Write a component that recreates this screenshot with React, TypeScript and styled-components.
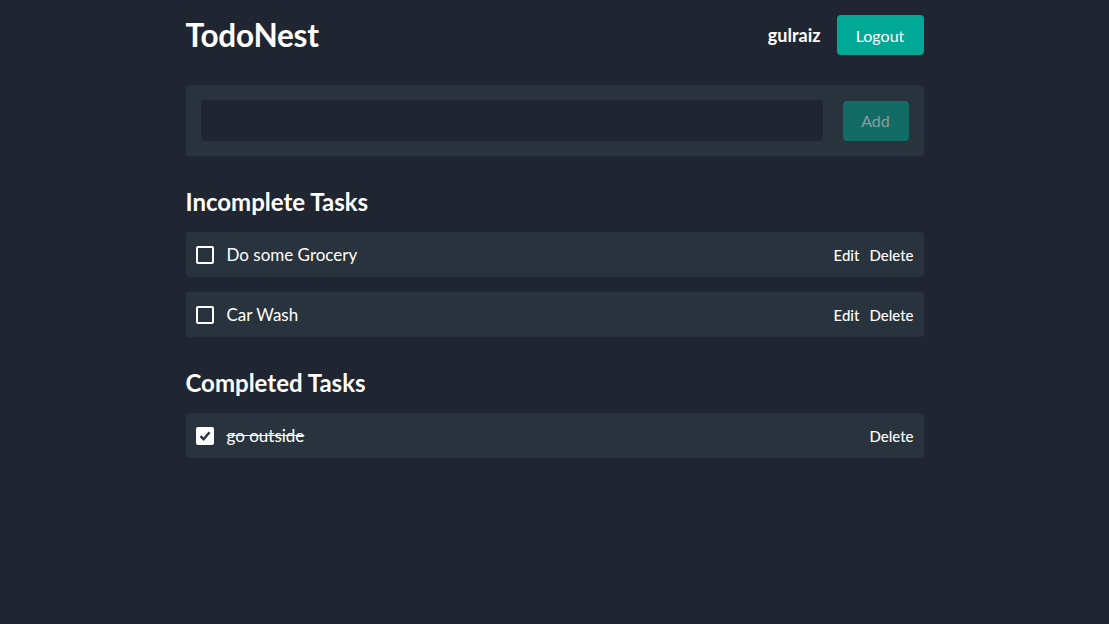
import React from "react";
import styled, { createGlobalStyle } from "styled-components";

const Global = createGlobalStyle`
  html, body { margin: 0; padding: 0; background: #1f2631; }
  body { font-family: "Source Sans Pro", Lato, "Noto Sans", sans-serif; color: #ffffff; }
  * { box-sizing: border-box; }
`;

const Page = styled.div`
  min-height: 624px;
  background: #1f2631;
`;

const Container = styled.div`
  width: 738px;
  margin: 0 auto;
  padding-top: 15px;
`;

const Header = styled.header`
  display: flex;
  align-items: center;
  justify-content: space-between;
  height: 40px;
`;

const Title = styled.h1`
  margin: 0;
  font-size: 31.5px;
  font-weight: 700;
  letter-spacing: -0.2px;
`;

const UserArea = styled.div`
  display: flex;
  align-items: center;
  gap: 16px;
`;

const UserName = styled.span`
  font-size: 18px;
  font-weight: 700;
`;

const Button = styled.button<{ $variant?: "primary" | "muted" }>`
  height: 40px;
  width: ${(p) => (p.$variant === "muted" ? "66px" : "87px")};
  border: none;
  border-radius: 4px;
  font-family: inherit;
  font-size: 16px;
  padding: 0;
  cursor: pointer;
  background: ${(p) => (p.$variant === "muted" ? "#136b66" : "#00a896")};
  color: ${(p) => (p.$variant === "muted" ? "#8a9d9f" : "#ffffff")};
`;

const AddCard = styled.form`
  margin-top: 30px;
  display: flex;
  align-items: center;
  gap: 20px;
  padding: 15px;
  background: #29333d;
  border-radius: 4px;
`;

const Input = styled.input`
  flex: 1;
  height: 41px;
  border: none;
  border-radius: 4px;
  background: #1f2631;
  color: #fff;
  font-family: inherit;
  font-size: 16px;
  padding: 0 12px;
  outline: none;
`;

const SectionTitle = styled.h2`
  margin: 0;
  font-size: 24px;
  font-weight: 700;
  line-height: 30px;
`;

const Section = styled.section<{ $top: number }>`
  margin-top: ${(p) => p.$top}px;
  display: flex;
  flex-direction: column;
  gap: 15px;
`;

const TaskRow = styled.div`
  display: flex;
  align-items: center;
  height: 45px;
  padding: 0 10px;
  background: #29333d;
  border-radius: 4px;
`;

const Check = styled.span<{ $checked?: boolean }>`
  width: 18px;
  height: 18px;
  border: 2px solid #ffffff;
  border-radius: 2px;
  background: ${(p) => (p.$checked ? "#ffffff" : "transparent")};
  display: flex;
  align-items: center;
  justify-content: center;
  flex-shrink: 0;
`;

const TaskText = styled.span<{ $done?: boolean }>`
  margin-left: 13px;
  font-size: 17px;
  flex: 1;
  text-decoration: ${(p) => (p.$done ? "line-through" : "none")};
`;

const Actions = styled.div`
  display: flex;
  gap: 10px;
`;

const LinkButton = styled.button`
  background: none;
  border: none;
  padding: 0;
  color: #ffffff;
  font-family: inherit;
  font-size: 15px;
  font-weight: 500;
  cursor: pointer;
`;

type Task = { id: number; text: string; done: boolean };

const tasks: Task[] = [
  { id: 1, text: "Do some Grocery", done: false },
  { id: 2, text: "Car Wash", done: false },
  { id: 3, text: "go outside", done: true },
];

function Row({ task }: { task: Task }) {
  return (
    <TaskRow>
      <Check $checked={task.done}>
        {task.done && (
          <svg width="12" height="12" viewBox="0 0 12 12">
            <path d="M1.5 6.2 L4.6 9.2 L10.5 2.2" fill="none" stroke="#29333d" strokeWidth="2.4" />
          </svg>
        )}
      </Check>
      <TaskText $done={task.done}>{task.text}</TaskText>
      <Actions>
        {!task.done && <LinkButton>Edit</LinkButton>}
        <LinkButton>Delete</LinkButton>
      </Actions>
    </TaskRow>
  );
}

export default function App() {
  return (
    <Page>
      <Global />
      <Container>
        <Header>
          <Title>TodoNest</Title>
          <UserArea>
            <UserName>gulraiz</UserName>
            <Button>Logout</Button>
          </UserArea>
        </Header>
        <AddCard onSubmit={(e) => e.preventDefault()}>
          <Input type="text" />
          <Button $variant="muted" type="submit">Add</Button>
        </AddCard>
        <Section $top={31}>
          <SectionTitle>Incomplete Tasks</SectionTitle>
          {tasks.filter((t) => !t.done).map((t) => <Row key={t.id} task={t} />)}
        </Section>
        <Section $top={31}>
          <SectionTitle>Completed Tasks</SectionTitle>
          {tasks.filter((t) => t.done).map((t) => <Row key={t.id} task={t} />)}
        </Section>
      </Container>
    </Page>
  );
}
